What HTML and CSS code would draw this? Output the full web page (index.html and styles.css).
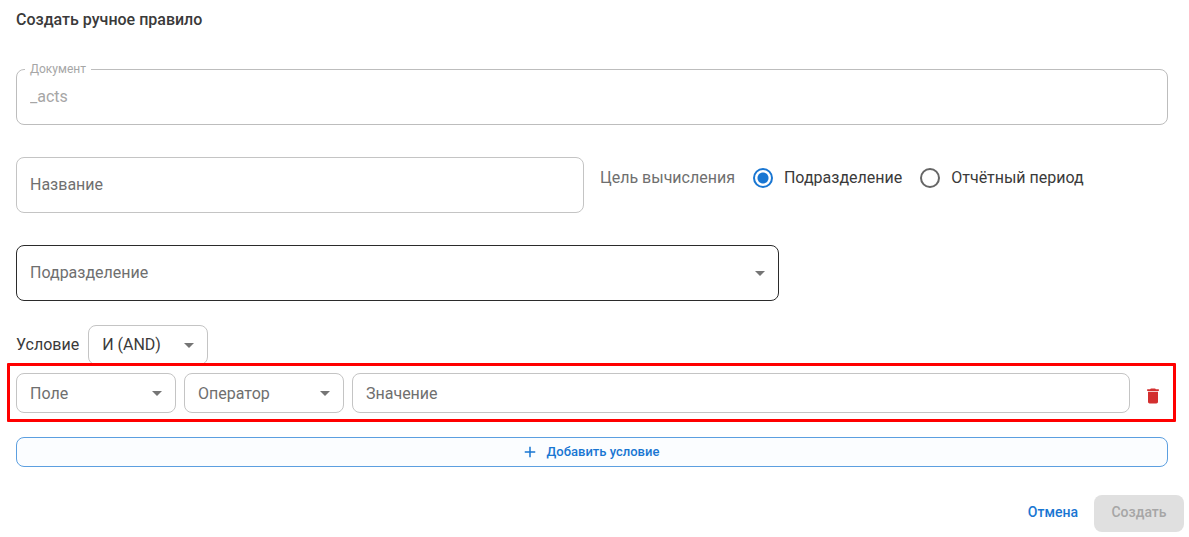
FILE: index.html
```html
<!DOCTYPE html>
<html lang="ru">
<head>
<meta charset="UTF-8">
<title>Создать ручное правило</title>
<link rel="stylesheet" href="styles.css">
</head>
<body>
	<form class="rule-form">
		<h1>Создать ручное правило</h1>

		<div class="fields">
			<div class="field filled">
				<input type="text" id="document" value="_acts" disabled>
				<label for="document">Документ</label>
			</div>

			<div class="row halves">
				<div class="field">
					<input type="text" id="name">
					<label for="name">Название</label>
				</div>
				<div class="target" role="radiogroup" aria-labelledby="target-title">
					<span class="target-title" id="target-title">Цель вычисления</span>
					<label class="radio"><input type="radio" name="target" value="department" checked>Подразделение</label>
					<label class="radio"><input type="radio" name="target" value="period">Отчётный период</label>
				</div>
			</div>

			<div class="row thirds">
				<div class="field select active">
					<select id="department"><option value=""></option></select>
					<label for="department">Подразделение</label>
					<svg class="arrow" viewBox="0 0 24 24"><path d="M7 10l5 5 5-5z"/></svg>
				</div>
			</div>
		</div>

		<!-- conditions -->
		<div class="conditions">
			<div class="logic">
				<label for="logic">Условие</label>
				<div class="field select small">
					<select id="logic">
						<option value="and">И (AND)</option>
					</select>
					<svg class="arrow" viewBox="0 0 24 24"><path d="M7 10l5 5 5-5z"/></svg>
				</div>
			</div>
			<div class="condition">
				<div class="field select small">
					<select id="column"><option value=""></option></select>
					<label for="column">Поле</label>
					<svg class="arrow" viewBox="0 0 24 24"><path d="M7 10l5 5 5-5z"/></svg>
				</div>
				<div class="field select small">
					<select id="operator"><option value=""></option></select>
					<label for="operator">Оператор</label>
					<svg class="arrow" viewBox="0 0 24 24"><path d="M7 10l5 5 5-5z"/></svg>
				</div>
				<div class="field small value">
					<input type="text" id="value">
					<label for="value">Значение</label>
				</div>
				<button type="button" class="delete" aria-label="Удалить">
					<svg viewBox="0 0 24 24"><path d="M6 19c0 1.100.9 2 2 2h8c1.100 0 2-.9 2-2V7H6v12zM19 4h-3.500l-1-1h-5l-1 1H5v2h14V4z"/></svg>
				</button>
			</div>
			<button type="button" class="add">
				<svg viewBox="0 0 24 24"><path d="M19 13h-6v6h-2v-6H5v-2h6V5h2v6h6v2z"/></svg>
				Добавить условие
			</button>
		</div>

		<div class="actions">
			<button type="button" class="cancel">Отмена</button>
			<button type="submit" class="submit" disabled>Создать</button>
		</div>
	</form>
</body>
</html>
```
FILE: styles.css
```css
* {
	box-sizing: border-box;
}
body {
	margin: 0;
	background: #fff;
	color: #3a3a3a;
	font: 16px/24px Roboto, sans-serif;
}
input, select, button {
	margin: 0;
	font: inherit;
	color: inherit;
}
button {
	border: none;
	background: none;
	border-radius: 8px;
	font-weight: 500;
	cursor: pointer;
}
svg {
	fill: currentColor;
}
.rule-form {
	padding: 8px 5px 5px 16px;
}
h1 {
	margin: 0 0 37px;
	font-size: 16px;
	line-height: 24px;
	font-weight: 500;
}
.fields,
.conditions {
	display: flex;
	flex-direction: column;
	margin-right: 16px;
}
.fields {
	gap: 32px;
}
.row {
	display: grid;
}
.halves {
	grid-template-columns: 1fr 1fr;
	gap: 16px;
}
.thirds {
	grid-template-columns: 2fr 1fr;
	gap: 8px;
}

/* text boxes and selects */
.field {
	position: relative;
}
.field input,
.field select {
	display: block;
	width: 100%;
	height: 56px;
	padding: 0 13px;
	border: 1px solid #c4c4c4;
	border-radius: 8px;
	background: #fff;
	appearance: none;
}
.field label {
	position: absolute;
	left: 14px;
	top: 16px;
	color: #6f6f6f;
	pointer-events: none;
}
.field.small input,
.field.small select {
	height: 40px;
}
.field.small label {
	top: 9px;
}
.field.active select {
	border-color: #2b2b2b;
}
.field.filled input {
	padding-bottom: 2px;
	border-color: #bdbdbd;
	color: #a6a6a6;
}
.field.filled label {
	top: -8px;
	left: 9px;
	padding: 0 5px;
	background: #fff;
	color: #a6a6a6;
	font-size: 12px;
	line-height: 16px;
}
.arrow {
	position: absolute;
	top: calc(50% - 12px);
	right: 7px;
	width: 24px;
	height: 24px;
	color: #757575;
	pointer-events: none;
}

/* radio buttons */
.target {
	display: flex;
	align-items: center;
	gap: 18px;
	height: 42px;
	white-space: nowrap;
}
.target-title {
	color: #6f6f6f;
}
.radio {
	display: flex;
	align-items: center;
	gap: 11px;
}
.radio input {
	width: 20px;
	height: 20px;
	border: 2px solid #666;
	border-radius: 50%;
	appearance: none;
}
.radio input:checked {
	border-color: #1976d2;
	background: radial-gradient(circle, #1976d2 5px, transparent 6px);
}

/* conditions */
.conditions {
	margin-top: 24px;
}
.logic {
	display: flex;
	align-items: center;
	gap: 9px;
	margin-bottom: 8px;
}
.logic .field {
	width: 120px;
}
.condition {
	position: relative;
	display: flex;
	align-items: flex-end;
	gap: 8px;
	margin-bottom: 24px;
}
.condition::after {
	content: "";
	position: absolute;
	inset: -10px -8px -9px -9px;
	border: 3px solid #f00;
	border-radius: 1px;
	pointer-events: none;
}
.condition .select {
	width: 160px;
}
.condition .value {
	flex: 1;
}
.delete {
	display: flex;
	align-items: center;
	justify-content: center;
	width: 30px;
	height: 34px;
	padding: 0;
	color: #d32f2f;
}
.delete svg {
	width: 20px;
	height: 20px;
}
.add {
	display: flex;
	align-items: center;
	justify-content: center;
	gap: 8px;
	height: 30px;
	padding: 0 4px 0 0;
	border: 1px solid #5c9fe0;
	background: #fbfdff;
	color: #1976d2;
	font-size: 13px;
}
.add svg {
	width: 18px;
	height: 18px;
}

.actions {
	display: flex;
	justify-content: flex-end;
	gap: 8px;
	margin-top: 28px;
	font-size: 14px;
}
.actions button {
	height: 37px;
	padding: 0 8px 3px;
}
.actions .cancel {
	color: #1976d2;
}
.actions .submit {
	min-width: 90px;
	background: #e0e0e0;
	color: #a6a6a6;
}
```
